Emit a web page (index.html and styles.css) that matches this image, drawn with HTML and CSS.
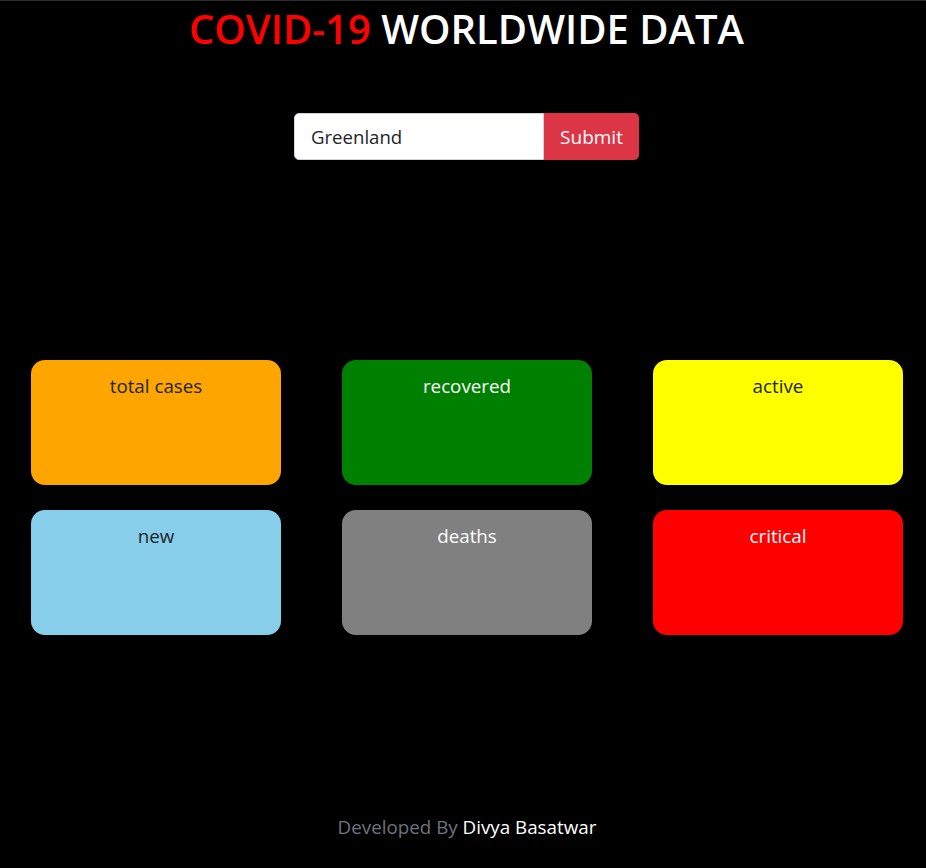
FILE: index.html
```html
<!DOCTYPE html>
<html lang="en">
<head>
<meta charset="utf-8">
<title>COVID-19 Worldwide Data</title>
<link rel="stylesheet" href="styles.css">
</head>
<body>
<header class="topbar"></header>
<h1 class="title"><span class="red">COVID-19</span> WORLDWIDE DATA</h1>
<form class="search">
  <input class="search-input" type="text" value="Greenland">
  <button class="search-btn" type="button">Submit</button>
</form>
<main class="cards">
  <div class="card orange">total cases</div>
  <div class="card green">recovered</div>
  <div class="card yellow">active</div>
  <div class="card blue">new</div>
  <div class="card gray">deaths</div>
  <div class="card red-card">critical</div>
</main>
<footer class="footer">Developed By <span class="author">Divya Basatwar</span></footer>
</body>
</html>
```
FILE: styles.css
```css
* { box-sizing: border-box; }
html, body { margin: 0; padding: 0; }
body {
  background: #000;
  height: 868px;
  font-family: "Open Sans", "Noto Sans", sans-serif;
  color: #fff;
  display: flex;
  flex-direction: column;
}
.topbar {
  height: 1px;
  background: #2d2d2d;
}
.title {
  margin: 8px 0 0;
  padding-left: 7px;
  text-align: center;
  font-size: 40px;
  font-weight: 600;
  line-height: 40px;
  letter-spacing: 0;
}
.red { color: #ff0000; }
.search {
  display: flex;
  justify-content: center;
  margin-top: 64px;
  padding-left: 7px;
}
.search-input {
  width: 250px;
  height: 47px;
  border: 1px solid #ced4da;
  border-radius: 5px 0 0 5px;
  padding: 0 16px;
  font-family: inherit;
  font-size: 18.6px;
  color: #212529;
  background: #fff;
  outline: none;
}
.search-btn {
  width: 95px;
  height: 47px;
  border: none;
  border-radius: 0 5px 5px 0;
  background: #dc3545;
  color: #fff;
  font-family: inherit;
  font-size: 19px;
  padding: 0;
}
.cards {
  display: grid;
  grid-template-columns: repeat(3, 250px);
  column-gap: 61px;
  row-gap: 25px;
  padding-left: 31px;
  margin-top: 200px;
}
.card {
  height: 125px;
  border-radius: 14px;
  text-align: center;
  padding-top: 14px;
  font-size: 18.8px;
  line-height: 24px;
  color: #212529;
}
.orange { background: #ffa500; }
.green { background: #008000; color: #fff; }
.yellow { background: #ffff00; }
.blue { background: #87ceeb; }
.gray { background: #808080; color: #fff; }
.red-card { background: #ff0000; color: #fff; }
.footer {
  margin-top: auto;
  margin-bottom: 29px;
  padding-left: 8px;
  text-align: center;
  color: #6c757d;
  font-size: 18.8px;
  line-height: 24px;
}
.author { color: #fff; }
```
